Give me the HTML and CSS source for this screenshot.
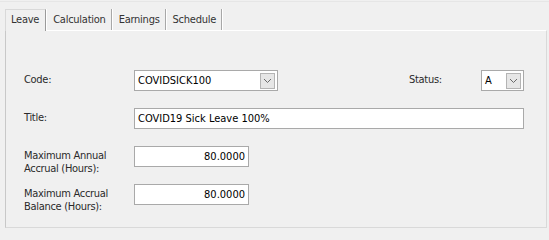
FILE: index.html
```html
<!DOCTYPE html>
<html>
<head>
<meta charset="utf-8">
<link rel="stylesheet" href="styles.css">
</head>
<body>
<div class="window">
  <div class="tabs">
    <div class="tab active">Leave</div>
    <div class="tab">Calculation</div>
    <div class="tab">Earnings</div>
    <div class="tab">Schedule</div>
  </div>
  <div class="panel">
    <div class="row">
      <div class="label">Code:</div>
      <div class="field select code"><span class="val">COVIDSICK100</span><span class="btn"><svg width="9" height="6" viewBox="0 0 9 6"><path d="M1 1 L4.5 4.5 L8 1" fill="none" stroke="#6a6a6a" stroke-width="1"/></svg></span></div>
      <div class="spacer"></div>
      <div class="label status-label">Status:</div>
      <div class="field select status"><span class="val">A</span><span class="btn"><svg width="9" height="6" viewBox="0 0 9 6"><path d="M1 1 L4.5 4.5 L8 1" fill="none" stroke="#6a6a6a" stroke-width="1"/></svg></span></div>
    </div>
    <div class="row">
      <div class="label">Title:</div>
      <div class="field title"><span class="val">COVID19 Sick Leave 100%</span></div>
    </div>
    <div class="row">
      <div class="label">Maximum Annual<br>Accrual (Hours):</div>
      <div class="field num"><span class="val">80.0000</span></div>
    </div>
    <div class="row">
      <div class="label">Maximum Accrual<br>Balance (Hours):</div>
      <div class="field num"><span class="val">80.0000</span></div>
    </div>
  </div>
</div>
</body>
</html>
```
FILE: styles.css
```css
html, body {
  margin: 0;
  padding: 0;
  background: #f0f0f0;
}
body {
  width: 549px;
  height: 228px;
  overflow: hidden;
  font-family: "DejaVu Sans Condensed", "DejaVu Sans", sans-serif;
  font-stretch: condensed;
  font-size: 11px;
  color: #333;
}
.window {
  padding: 7px 2px 0 5px;
  border-top: 1px solid #e6e6e6;
  margin-top: 1px;
  box-sizing: border-box;
  height: 227px;
  display: flex;
  flex-direction: column;
}
.tabs {
  display: flex;
  height: 21px;
  flex: none;
  align-items: stretch;
}
.tab {
  padding: 0 5px 0 6px;
  line-height: 21px;
  letter-spacing: -0.25px;
  border-right: 1px solid #a8a8a8;
  box-shadow: 1px 0 0 #ffffff;
  margin-right: 1px;
}
.tab.active {
  background: #f0f0f0;
  border: 1px solid #d9d9d9;
  border-bottom: none;
  border-right: 1px solid #9a9a9a;
  padding: 0 6px 0 5px;
  line-height: 20px;
  height: 22px;
  box-sizing: border-box;
  position: relative;
  z-index: 1;
  margin-bottom: -1px;
}
.panel {
  flex: 1;
  border: 1px solid #d9d9d9;
  border-top: 1px solid #ffffff;
  border-left: 1px solid #c8c8c8;
  padding: 39px 22px 0 18px;
  display: flex;
  flex-direction: column;
  gap: 17px;
}
.row {
  display: flex;
  align-items: flex-start;
  height: 21px;
}
.label {
  width: 110px;
  flex: none;
  line-height: 13px;
  padding-top: 3px;
  letter-spacing: -0.3px;
  color: #2a2a2a;
}
.status-label {
  width: 72px;
}
.spacer {
  flex: 1;
}
.field {
  height: 21px;
  box-sizing: border-box;
  border: 1px solid #a9a9a9;
  background: #ffffff;
  color: #000;
  display: flex;
  align-items: center;
  padding: 0 3px;
  line-height: 19px;
}
.field .val {
  flex: 1;
  white-space: nowrap;
}
.select {
  padding-right: 2px;
}
.select .btn {
  width: 15px;
  height: 16px;
  box-sizing: border-box;
  border: 1px solid #b4b4b4;
  background: #e6e6e6;
  display: flex;
  align-items: center;
  justify-content: center;
}
.code {
  width: 144px;
}
.status {
  width: 43px;
}
.title {
  flex: 1;
}
.num {
  width: 115px;
  text-align: right;
  padding-right: 3px;
}
```
